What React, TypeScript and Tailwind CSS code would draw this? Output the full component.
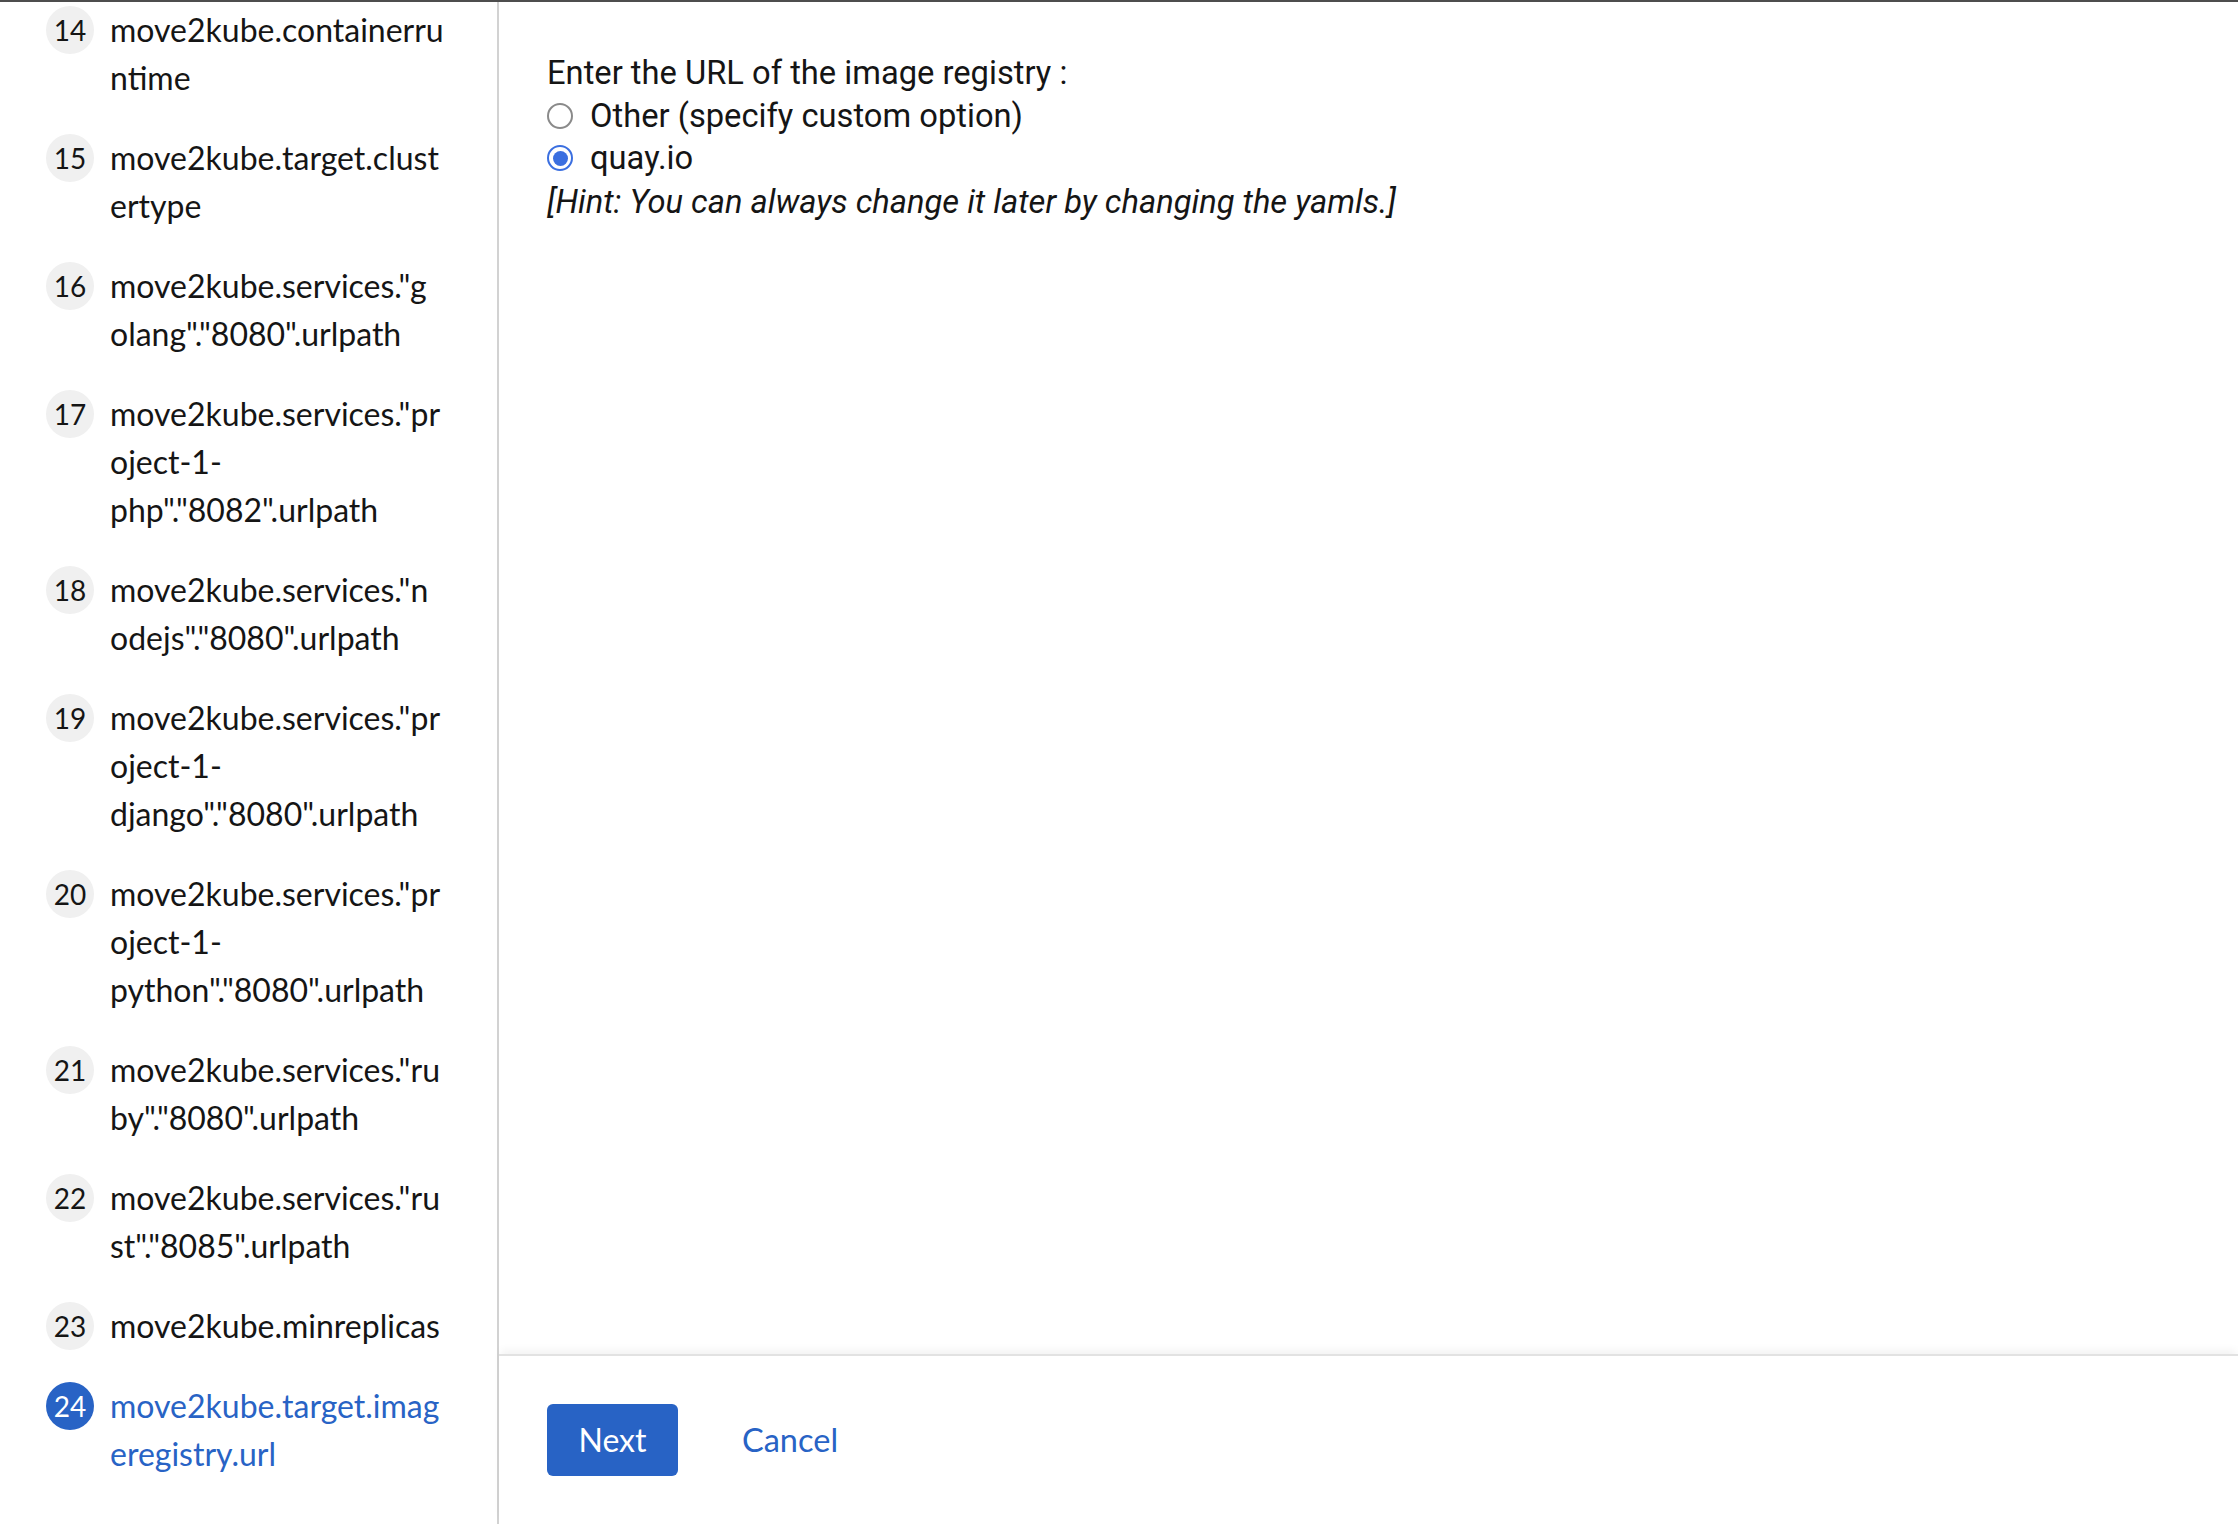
import React from 'react'

type NavItem = { n: number; lines: string[] }

const items: NavItem[] = [
    { n: 14, lines: ['move2kube.containerru', 'ntime'] },
    { n: 15, lines: ['move2kube.target.clust', 'ertype'] },
    { n: 16, lines: ['move2kube.services."g', 'olang"."8080".urlpath'] },
    { n: 17, lines: ['move2kube.services."pr', 'oject-1-', 'php"."8082".urlpath'] },
    { n: 18, lines: ['move2kube.services."n', 'odejs"."8080".urlpath'] },
    { n: 19, lines: ['move2kube.services."pr', 'oject-1-', 'django"."8080".urlpath'] },
    { n: 20, lines: ['move2kube.services."pr', 'oject-1-', 'python"."8080".urlpath'] },
    { n: 21, lines: ['move2kube.services."ru', 'by"."8080".urlpath'] },
    { n: 22, lines: ['move2kube.services."ru', 'st"."8085".urlpath'] },
    { n: 23, lines: ['move2kube.minreplicas'] },
    { n: 24, lines: ['move2kube.target.imag', 'eregistry.url'] },
]

const ACTIVE = 24

function Radio({ checked }: { checked?: boolean }) {
    return checked ? (
        <span className="flex h-[26px] w-[26px] shrink-0 items-center justify-center rounded-full border-2 border-[#3b6fe0] bg-white">
            <span className="h-[15px] w-[15px] rounded-full bg-[#3b6fe0]" />
        </span>
    ) : (
        <span className="h-[26px] w-[26px] shrink-0 rounded-full border-2 border-[#8a8a8a] bg-white" />
    )
}

export default function App() {
    return (
        <div className="flex h-[1524px] w-full flex-col overflow-hidden border-t-2 border-[#4d4d4d] bg-white text-[#151515]">
            <div className="flex min-h-0 flex-1">
                {/* wizard nav */}
                <aside className="w-[499px] shrink-0 overflow-hidden border-r-2 border-[#d2d2d2] pl-[46px] pt-[4px] font-['Lato',sans-serif]">
                    <ol className="flex flex-col gap-[32px]">
                        {items.map((it) => {
                            const active = it.n === ACTIVE
                            return (
                                <li key={it.n} className="flex gap-[16px]">
                                    <span
                                        className={`flex h-[48px] w-[48px] shrink-0 items-center justify-center rounded-full text-[28px] ${active ? 'bg-[#2863c5] text-white' : 'bg-[#f0f0f0] text-[#151515]'}`}
                                    >
                                        {it.n}
                                    </span>
                                    <span className={`flex flex-col text-[32px] leading-[48px] ${active ? 'text-[#2863c5]' : 'text-[#151515]'}`}>
                                        {it.lines.map((l, i) => (
                                            <span key={i} className="whitespace-nowrap">{l}</span>
                                        ))}
                                    </span>
                                </li>
                            )
                        })}
                    </ol>
                </aside>

                {/* main */}
                <main className="flex min-w-0 flex-1 flex-col">
                    <div className="flex-1 pl-[48px] pt-[49px] font-['Roboto',sans-serif] text-[32.7px]">
                        <p className="leading-[44px]">Enter the URL of the image registry :</p>
                        <label className="flex items-center gap-[17px] leading-[42px]">
                            <Radio />
                            <span>Other (specify custom option)</span>
                        </label>
                        <label className="flex items-center gap-[17px] leading-[42px]">
                            <Radio checked />
                            <span>quay.io</span>
                        </label>
                        <p className="italic leading-[46px]">[Hint: You can always change it later by changing the yamls.]</p>
                    </div>
                    <footer className="flex items-center gap-[64px] border-t-2 border-[#e2e2e2] px-[48px] py-[48px] shadow-[0_-6px_8px_-2px_rgba(0,0,0,0.05)] font-['Lato',sans-serif]">
                        <button className="h-[72px] w-[131px] rounded-[6px] bg-[#2863c5] text-[32px] text-white">Next</button>
                        <button className="text-[32.5px] text-[#2863c5]">Cancel</button>
                    </footer>
                </main>
            </div>
        </div>
    )
}
